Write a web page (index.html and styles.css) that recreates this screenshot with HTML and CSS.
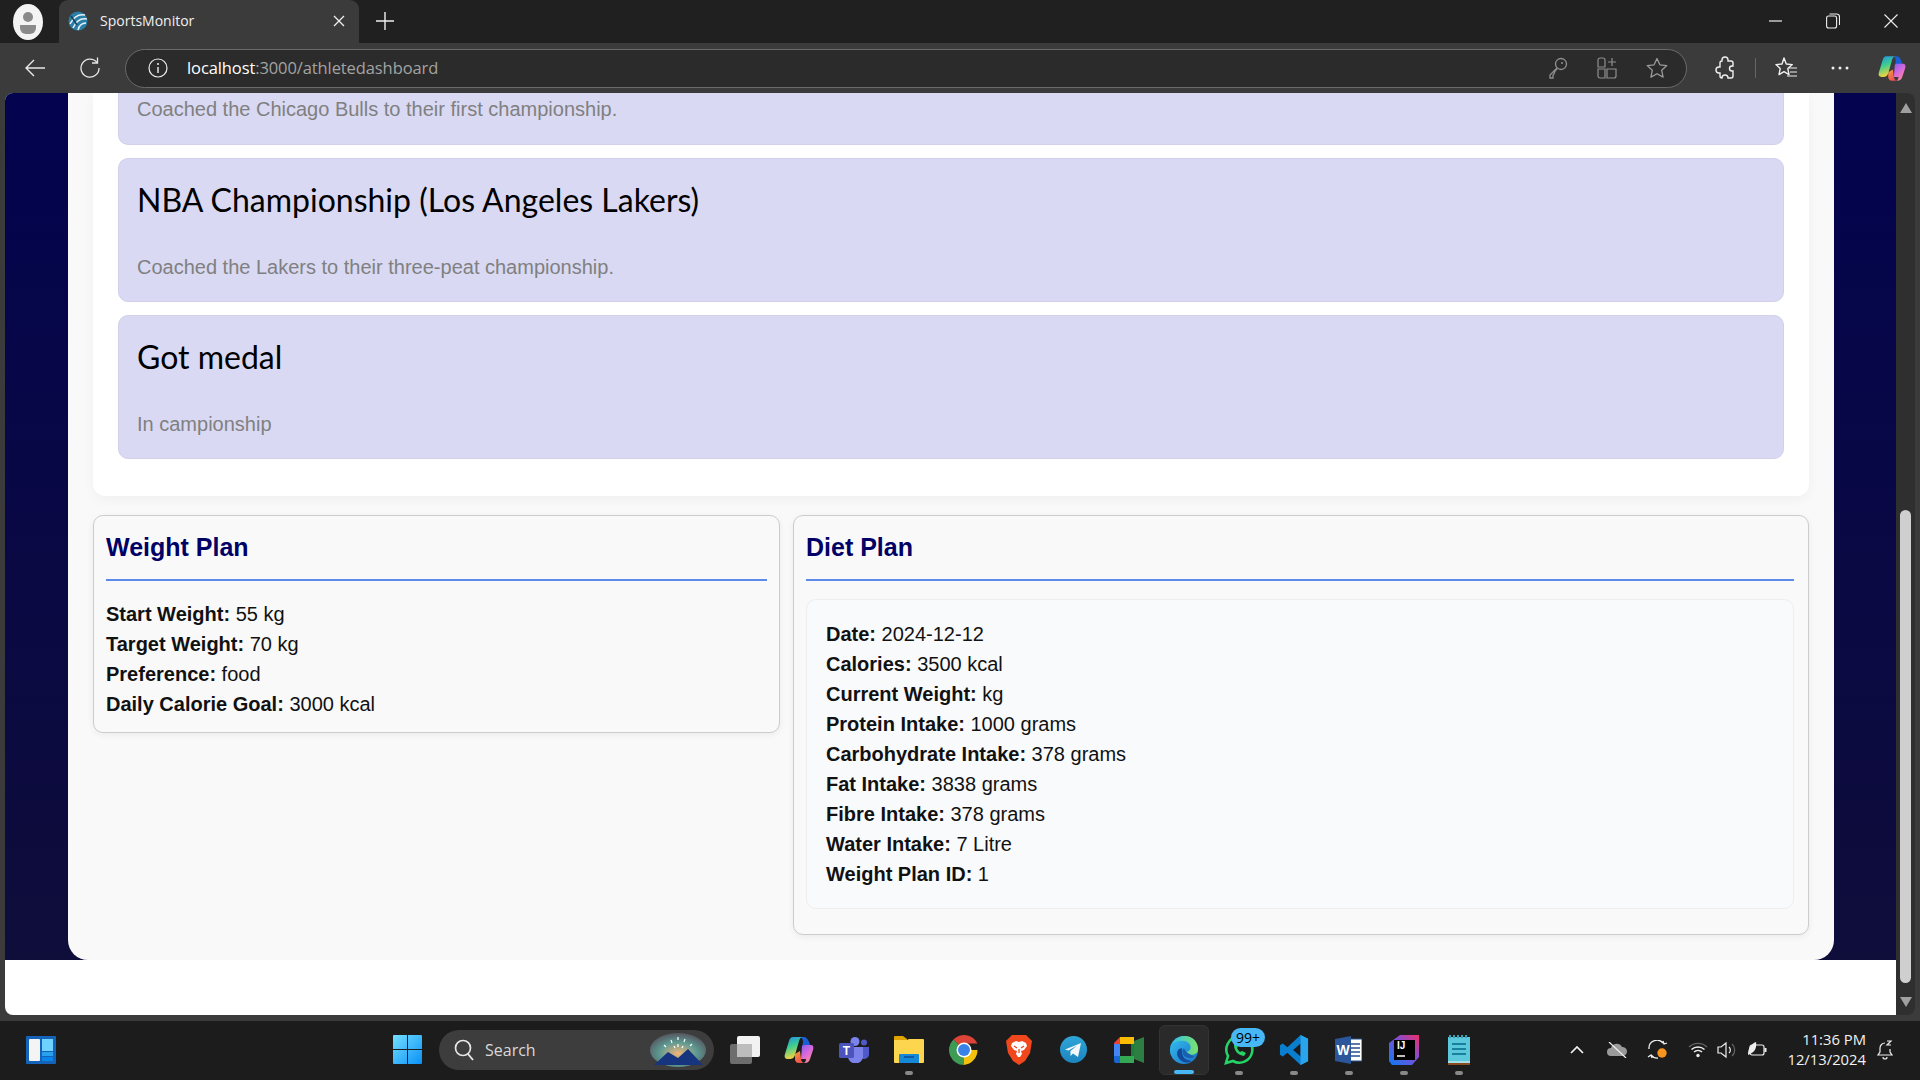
FILE: index.html
```html
<!DOCTYPE html>
<html lang="en">
<head>
    <meta charset="UTF-8">
    <title>SportsMonitor</title>
    <link rel="stylesheet" href="styles.css">
</head>
<body>
    <svg class="icon-defs" width="0" height="0">
        <defs>
            <linearGradient id="cpA" x1="0" y1="0" x2=".3" y2="1"><stop offset="0" stop-color="#1f8fe8"/><stop offset=".5" stop-color="#3fcf8e"/><stop offset="1" stop-color="#f5d33f"/></linearGradient>
            <linearGradient id="cpB" x1="0" y1="0" x2=".6" y2="1"><stop offset="0" stop-color="#8a5cf0"/><stop offset=".6" stop-color="#e06bd8"/><stop offset="1" stop-color="#f58a90"/></linearGradient>
            <linearGradient id="cpC" x1="0" y1="0" x2=".5" y2="1"><stop offset="0" stop-color="#f5a03f"/><stop offset="1" stop-color="#f0504f"/></linearGradient>
            <symbol id="copilot" viewBox="0 0 30 28">
                <path d="M17 1h3c2 0 4 2 5 5l1 3-8 3 1-6c0-2-1-4-2-5z" fill="#1b5fd8"/>
                <path d="M11 18l5-3 1 8c0 2 2 4 3 4h-5c-3 0-4-2-4-4z" fill="url(#cpC)"/>
                <path d="M18 10c1-1 2-1 3-1h6c2 0 3 2 2 5l-3 9c-1 3-3 4-5 4h-2c2 0 3-2 3-4l-5 0z" fill="url(#cpB)"/>
                <path d="M9 1h10c-2 0-3 1-4 4l-4 14c-1 3-3 4-5 4H4C1 23 0 21 1 18L5 5C6 2 7 1 9 1z" fill="url(#cpA)"/>
            </symbol>
        </defs>
    </svg>

    <div class="tabstrip">
        <div class="profile">
            <svg width="30" height="36" viewBox="0 0 30 36"><ellipse cx="15" cy="18" rx="15" ry="18" fill="#f4f4f4"/><circle cx="15" cy="13" r="5" fill="#8a8a8a"/><path d="M7 21h16v3a6 6 0 0 1-6 6h-4a6 6 0 0 1-6-6z" fill="#8a8a8a"/></svg>
        </div>
        <div class="tab">
            <svg width="20" height="20" viewBox="0 0 20 20"><circle cx="10" cy="10" r="9.500" fill="#2a7fa8"/><path d="M2 13C6 5 12 3 17 4M5 17C8 10 13 7 19 8M10 19c1-4 4-7 8-7" fill="none" stroke="#e8f2f6" stroke-width="1.500"/><path d="M3 5l6 9" stroke="#123f5c" stroke-width="1.500"/></svg>
            <span class="tab-title">SportsMonitor</span>
            <svg class="tab-close" width="12" height="12" viewBox="0 0 12 12"><path d="M1 1l10 10M11 1L1 11" stroke="#f0f0f0" stroke-width="1.300"/></svg>
        </div>
        <svg class="new-tab" width="18" height="18" viewBox="0 0 18 18"><path d="M9 0v18M0 9h18" stroke="#f0f0f0" stroke-width="1.400"/></svg>
        <div class="win-controls">
            <svg width="14" height="14" viewBox="0 0 14 14"><path d="M1 7h13" stroke="#eee" stroke-width="1.200"/></svg>
            <svg width="14" height="16" viewBox="0 0 14 16"><rect x=".6" y="3" width="10" height="12" rx="2" fill="none" stroke="#eee" stroke-width="1.100"/><path d="M3.500 1h7a3 3 0 0 1 3 3v8" fill="none" stroke="#eee" stroke-width="1.100"/></svg>
            <svg width="14" height="14" viewBox="0 0 14 14"><path d="M.5.5l13 13M13.500.5l-13 13" stroke="#eee" stroke-width="1.100"/></svg>
        </div>
    </div>

    <div class="toolbar">
        <svg class="tool-back" width="20" height="18" viewBox="0 0 20 18"><path d="M9 1L1 9l8 8M1 9h19" fill="none" stroke="#e8e8e8" stroke-width="1.400"/></svg>
        <svg class="tool-reload" width="20" height="22" viewBox="0 0 20 22"><path d="M17 5.500A9 9 0 1 0 19 11" fill="none" stroke="#e8e8e8" stroke-width="1.300"/><path d="M17.500 .5v5.500h-5.500" fill="none" stroke="#e8e8e8" stroke-width="1.300"/></svg>
        <div class="addressbar">
            <svg width="20" height="20" viewBox="0 0 20 20"><circle cx="10" cy="10" r="9" fill="none" stroke="#eee" stroke-width="1.200"/><path d="M10 9v6" stroke="#eee" stroke-width="1.400"/><circle cx="10" cy="6" r="1" fill="#eee"/></svg>
            <span class="url"><span class="url-host">localhost</span>:3000/athletedashboard</span>
            <span class="address-icons">
                <svg width="20" height="22" viewBox="0 0 20 22"><circle cx="13" cy="7" r="5.500" fill="none" stroke="#8f8f8f" stroke-width="1.300"/><path d="M9 11l-7 7v3h3v-3l1-1 1-3 2-2" fill="none" stroke="#8f8f8f" stroke-width="1.300"/><circle cx="14" cy="6" r="1" fill="#8f8f8f"/></svg>
                <svg width="20" height="22" viewBox="0 0 20 22"><path d="M1 3a2 2 0 0 1 2-2h3a2 2 0 0 1 2 2v7H1zM1 12h7v9H3a2 2 0 0 1-2-2zM10 12h9v7a2 2 0 0 1-2 2h-7zM15 1v8M11 5h8" fill="none" stroke="#8f8f8f" stroke-width="1.200"/></svg>
                <svg width="22" height="22" viewBox="0 0 22 22"><path d="M11 1.500l2.900 6.300 6.900.8-5.100 4.700 1.400 6.800L11 16.700l-6.100 3.400 1.400-6.800L1.200 8.600l6.900-.8z" fill="none" stroke="#9a9a9a" stroke-width="1.300" stroke-linejoin="round"/></svg>
            </span>
        </div>
        <svg class="tool-puzzle" width="20" height="24" viewBox="0 0 20 24"><path d="M7 4a3 3 0 0 1 6 0v1h3a2 2 0 0 1 2 2v3h-1a2.500 2.500 0 0 0 0 5h1v5a2 2 0 0 1-2 2h-3a3 3 0 0 0-6 0 2 2 0 0 1-2-2v-3H4a3 3 0 0 1 0-6h1V7a2 2 0 0 1 2-2z" fill="none" stroke="#f0f0f0" stroke-width="1.400"/></svg>
        <span class="tool-sep"></span>
        <svg class="tool-fav" width="22" height="24" viewBox="0 0 22 24"><path d="M9 2l2.300 6 6 .6-4.500 4 1.200 6-5-3-5 3 1.200-6L1 8.600l6-.6z" fill="none" stroke="#f0f0f0" stroke-width="1.400" stroke-linejoin="round"/><path d="M14 12h8M15 16h7M12 20h10" stroke="#f0f0f0" stroke-width="1.200"/></svg>
        <svg class="tool-dots" width="18" height="4" viewBox="0 0 18 4"><circle cx="2" cy="2" r="1.500" fill="#eee"/><circle cx="9" cy="2" r="1.500" fill="#eee"/><circle cx="16" cy="2" r="1.500" fill="#eee"/></svg>
        <svg class="tool-copilot" width="28" height="27"><use href="#copilot"/></svg>
    </div>

    <div class="viewport">
        <main class="page">
            <div class="backdrop">
                <div class="dashboard">
                    <section class="achievements">
                        <div class="achievement achievement-cut">
                            <p>Coached the Chicago Bulls to their first championship.</p>
                        </div>
                        <div class="achievement">
                            <h3>NBA Championship (Los Angeles Lakers)</h3>
                            <p>Coached the Lakers to their three-peat championship.</p>
                        </div>
                        <div class="achievement">
                            <h3>Got medal</h3>
                            <p>In campionship</p>
                        </div>
                    </section>
                    <div class="plans">
                        <section class="plan plan-weight">
                            <h2>Weight Plan</h2>
                            <p><b>Start Weight:</b> 55 kg</p>
                            <p><b>Target Weight:</b> 70 kg</p>
                            <p><b>Preference:</b> food</p>
                            <p><b>Daily Calorie Goal:</b> 3000 kcal</p>
                        </section>
                        <section class="plan plan-diet">
                            <h2>Diet Plan</h2>
                            <div class="diet-entry">
                                <p><b>Date:</b> 2024-12-12</p>
                                <p><b>Calories:</b> 3500 kcal</p>
                                <p><b>Current Weight:</b> kg</p>
                                <p><b>Protein Intake:</b> 1000 grams</p>
                                <p><b>Carbohydrate Intake:</b> 378 grams</p>
                                <p><b>Fat Intake:</b> 3838 grams</p>
                                <p><b>Fibre Intake:</b> 378 grams</p>
                                <p><b>Water Intake:</b> 7 Litre</p>
                                <p><b>Weight Plan ID:</b> 1</p>
                            </div>
                        </section>
                    </div>
                </div>
            </div>
            <div class="page-foot"></div>
        </main>
        <div class="scrollbar">
            <span class="arrow-up"></span>
            <span class="thumb"></span>
            <span class="arrow-down"></span>
        </div>
    </div>

    <footer class="taskbar">
        <svg class="widgets" width="30" height="28" viewBox="0 0 30 28"><rect width="30" height="28" rx="1" fill="#1463b8"/><rect x="3" y="3" width="11" height="22" rx="1" fill="#f4f4f4"/><rect x="16" y="3" width="11" height="12" fill="#6fd3ff"/><rect x="16" y="16" width="11" height="4" fill="#2aa0f0"/><rect x="16" y="21" width="11" height="4" fill="#0a84e8"/></svg>
        <div class="task-center">
            <svg class="start" width="29" height="29" viewBox="0 0 29 29">
                <defs><linearGradient id="winG" x1="0" y1="0" x2="1" y2="1"><stop offset="0" stop-color="#74e0ff"/><stop offset="1" stop-color="#0a90f5"/></linearGradient></defs>
                <path d="M1 0h13v14H0V1a1 1 0 0 1 1-1zM15 0h13a1 1 0 0 1 1 1v13H15zM0 15h14v14H1a1 1 0 0 1-1-1zM15 15h14v13a1 1 0 0 1-1 1H15z" fill="url(#winG)"/>
            </svg>
            <div class="search">
                <svg width="20" height="22" viewBox="0 0 20 22"><circle cx="9" cy="9" r="7.500" fill="none" stroke="#e6e6e6" stroke-width="1.700"/><path d="M14 15l5 6" stroke="#e6e6e6" stroke-width="1.900"/></svg>
                <span class="search-text">Search</span>
                <svg class="search-art" width="56" height="34" viewBox="0 0 56 34">
                    <defs><radialGradient id="artG" cx=".5" cy=".6" r=".6"><stop offset="0" stop-color="#f2b67a"/><stop offset=".55" stop-color="#5d9a92"/><stop offset="1" stop-color="#55555f"/></radialGradient></defs>
                    <ellipse cx="28" cy="17" rx="28" ry="17" fill="url(#artG)"/>
                    <path d="M4 32l14-13 10 6 10-9 15 16z" fill="#17357f"/>
                    <path d="M28 4v3M21 7l1 3M35 6l-1 3M14 12l2 2M42 11l-2 2M28 11v3M24 13l1 2M33 13l-1 2" stroke="#fff" stroke-width="1.200"/>
                </svg>
            </div>
            <svg class="taskview" width="30" height="28" viewBox="0 0 30 28"><rect x="7" width="23" height="21" rx="2" fill="#f2f2f2"/><rect y="8" width="22" height="20" rx="2" fill="#777" fill-opacity=".9"/><rect x="7" y="8" width="15" height="13" fill="#bdbdbd"/></svg>
            <div class="apps">
                <span class="app"><svg width="30" height="28"><use href="#copilot"/></svg></span>
                <span class="app"><svg width="30" height="26" viewBox="0 0 30 26"><circle cx="16" cy="4.500" r="4.500" fill="#7b83eb"/><circle cx="25" cy="5.500" r="3" fill="#5059c9"/><path d="M21 10h9v7a5 5 0 0 1-9 3z" fill="#5059c9"/><path d="M9 10h15v10a7 6 0 0 1-15 0z" fill="#7b83eb"/><rect y="6" width="15" height="15" rx="1.500" fill="#4b53bc"/><text x="7.500" y="18" class="glyph-t">T</text></svg></span>
                <span class="app"><svg width="30" height="27" viewBox="0 0 30 27"><path d="M0 1a1 1 0 0 1 1-1h8l4 3v3H0z" fill="#e0a400"/><path d="M0 4h13l2-1h14a1 1 0 0 1 1 1v22a1 1 0 0 1-1 1H1a1 1 0 0 1-1-1z" fill="#fdd54f"/><path d="M5 27v-8a1 1 0 0 1 1-1h18a1 1 0 0 1 1 1v8z" fill="#1688d8"/><rect x="10" y="20" width="10" height="2" fill="#0a5ca8"/></svg><i class="dot"></i></span>
                <span class="app"><svg width="30" height="30" viewBox="0 0 30 30"><path d="M15 15L4.400 4.400A15 15 0 0 1 28.500 8.500H15z" fill="#db4437"/><path d="M15 15h13.500A15 15 0 0 1 15 30z" fill="#f4c20d"/><path d="M15 15v15A15 15 0 0 1 4.400 4.400z" fill="#3e9b54"/><circle cx="15" cy="15" r="7.500" fill="#fff"/><circle cx="15" cy="15" r="6" fill="#3b82e8"/></svg></span>
                <span class="app"><svg width="26" height="30" viewBox="0 0 26 30"><path d="M6 0h14l3 3 3 3-2 12-5 8-6 4-6-4-5-8L0 6l3-3z" fill="#f1471d"/><path d="M6 8l4-2 3 1 3-1 4 2 1 3-3 4-3 1 1 3-2 3h-2l-2-3 1-3-3-1-3-4z" fill="#fff"/><path d="M8 11l3 2M18 11l-3 2M13 14v4" stroke="#f1471d" stroke-width="1.300"/></svg></span>
                <span class="app"><svg width="27" height="27" viewBox="0 0 27 27"><defs><linearGradient id="tgG" x1="0" y1="0" x2="0" y2="1"><stop offset="0" stop-color="#2fa5d8"/><stop offset="1" stop-color="#1d84bd"/></linearGradient></defs><circle cx="13.500" cy="13.500" r="13.500" fill="url(#tgG)"/><path d="M5 13.500l16-6.500-3 14-5-3.500-2.500 2.500v-5l6.500-5.500-8.500 5z" fill="#f2f8fc"/></svg></span>
                <span class="app"><svg width="30" height="26" viewBox="0 0 30 26"><path d="M6 0h14v7H6z" fill="#fbbc04"/><path d="M0 6l6-6v7H0z" fill="#ea4335"/><path d="M0 7h6v12H0z" fill="#4285f4"/><path d="M0 19h6v7H2a2 2 0 0 1-2-2z" fill="#1967d2"/><path d="M6 19h14v7H6z" fill="#34a853"/><path d="M20 4v18l10 4V0z" fill="#34a853" opacity=".7"/><path d="M20 7h-3v12h3z" fill="#188038"/></svg></span>
                <span class="app app-active"><svg width="30" height="30" viewBox="0 0 30 32">
                    <defs>
                        <linearGradient id="edgeA" x1="0" y1="0" x2="1" y2="1"><stop offset="0" stop-color="#35c1f1"/><stop offset="1" stop-color="#1b6fc4"/></linearGradient>
                        <linearGradient id="edgeB" x1="0" y1="0" x2="1" y2="0"><stop offset="0" stop-color="#2fc3e8"/><stop offset="1" stop-color="#7ee06b"/></linearGradient>
                    </defs>
                    <circle cx="15" cy="16" r="15" fill="url(#edgeA)"/>
                    <path d="M2 10C6 2 12 1 16 1c8 0 14 6 14 14 0 4-3 6-6 6-3 0-5-1-6-3 3-1 4-3 4-5 0-4-4-7-9-7-5 0-9 2-11 4z" fill="url(#edgeB)"/>
                    <path d="M13 14c-5 0-7 5-4 10s9 7 14 4l-3-1c-4-1-8-4-7-13z" fill="#124a9c"/>
                    <path d="M15 14c-3 2-2 8 3 10 3 1 6 1 8-1l-6-3c-3-2-4-4-5-6z" fill="#1b5fb0"/>
                </svg><i class="dot dot-active"></i></span>
                <span class="app"><svg width="30" height="30" viewBox="0 0 30 30"><path d="M2 28l2-7A13 13 0 1 1 9 26z" fill="none" stroke="#25d366" stroke-width="2.600"/><path d="M10 10c0 6 4 10 10 11l2-3-4-2-2 1c-1-1-2-2-3-4l1-2-2-3z" fill="#25d366"/></svg><i class="dot"></i><em class="badge">99+</em></span>
                <span class="app"><svg width="30" height="30" viewBox="0 0 30 32"><path d="M22 0l8 4v24l-8 4-14-13-5 4-3-2v-10l3-2 5 4zM22 9l-8 7 8 7z" fill="#0a7fd0"/><path d="M22 0l8 4v24l-8 4z" fill="#2aa5ec"/></svg><i class="dot"></i></span>
                <span class="app"><svg width="27" height="28" viewBox="0 0 27 28"><rect x="12" y="3" width="15" height="22" fill="#fff" stroke="#24508f"/><path d="M16 8h9M16 12h9M16 16h9M16 20h9" stroke="#24508f" stroke-width="1.500"/><path d="M0 3l16-3v28L0 25z" fill="#2b579a"/><text x="8" y="19" class="glyph-w">W</text></svg><i class="dot"></i></span>
                <span class="app"><svg width="30" height="30" viewBox="0 0 30 30">
                    <defs><linearGradient id="ijG" x1="0" y1="1" x2="1" y2="0"><stop offset="0" stop-color="#0a7cf2"/><stop offset=".55" stop-color="#7a4fd8"/><stop offset="1" stop-color="#f02e6a"/></linearGradient></defs>
                    <path d="M0 8L11 0h19v22l-7 8H3l-3-4z" fill="url(#ijG)"/><rect x="5" y="5" width="21" height="20" fill="#000"/><text x="8" y="14" class="glyph-ij">IJ</text><path d="M8 21h8" stroke="#fff" stroke-width="1.500"/></svg><i class="dot"></i></span>
                <span class="app"><svg width="22" height="30" viewBox="0 0 22 30"><rect y="2" width="22" height="28" fill="#5cc8dc"/><rect y="26" width="22" height="2" fill="#a5e0ea"/><rect y="28" width="22" height="2" fill="#8a4b20"/><path d="M2 0v3M6 0v3M10 0v3M14 0v3M18 0v3" stroke="#3a9fb5" stroke-width="2"/><path d="M4 9h14M4 14h14M4 19h14" stroke="#1a7f9c" stroke-width="2"/></svg><i class="dot"></i></span>
            </div>
        </div>
        <div class="tray">
            <svg class="tray-chevron" width="14" height="8" viewBox="0 0 14 8"><path d="M1 7l6-6 6 6" fill="none" stroke="#f2f2f2" stroke-width="1.700"/></svg>
            <svg class="tray-cloud" width="22" height="16" viewBox="0 0 22 16"><path d="M5 14a4 4 0 0 1 0-8 6 6 0 0 1 11-1 4.500 4.500 0 0 1 1 9z" fill="#9a9a9a"/><path d="M3 0l17 16" stroke="#f0f0f0" stroke-width="1.200"/></svg>
            <svg class="tray-sync" width="22" height="20" viewBox="0 0 22 20"><path d="M2 9A8 8 0 0 1 16 3M20 3l-3 1-1-3" fill="none" stroke="#eee" stroke-width="1.300"/><path d="M11 18a8 8 0 0 1-7-3M1 17l3-2 1 3" fill="none" stroke="#eee" stroke-width="1.300"/><circle cx="15" cy="13" r="4.700" fill="#f7941d"/></svg>
            <svg class="tray-wifi" width="20" height="16" viewBox="0 0 20 16"><path d="M1 5a13 13 0 0 1 18 0" fill="none" stroke="#666" stroke-width="1.300"/><path d="M3.500 7.500a9.500 9.500 0 0 1 13 0M6 10a6 6 0 0 1 8 0" fill="none" stroke="#eee" stroke-width="1.500"/><circle cx="10" cy="13.500" r="1.700" fill="#eee"/></svg>
            <svg class="tray-volume" width="20" height="18" viewBox="0 0 20 18"><path d="M1 6h3l5-4v14l-5-4H1z" fill="none" stroke="#eee" stroke-width="1.200"/><path d="M12 6a4 4 0 0 1 0 6" fill="none" stroke="#eee" stroke-width="1.200"/><path d="M15 3a8 8 0 0 1 0 12" fill="none" stroke="#666" stroke-width="1.200"/></svg>
            <svg class="tray-battery" width="20" height="16" viewBox="0 0 20 16"><rect x="3" y="3" width="14" height="10" rx="2" fill="none" stroke="#eee" stroke-width="1.200"/><rect x="17.500" y="6" width="2" height="4" fill="#eee"/><path d="M1 13C1 6 4 2 9 0c1 5-1 10-6 12z" fill="#eee"/></svg>
            <div class="clock"><span>11:36 PM</span><span>12/13/2024</span></div>
            <svg class="tray-bell" width="18" height="20" viewBox="0 0 18 20"><path d="M9 3a5 5 0 0 0-5 5v4l-2 3h14l-2-3V9" fill="none" stroke="#eee" stroke-width="1.200"/><path d="M7 17a2 2 0 0 0 4 0" fill="none" stroke="#eee" stroke-width="1.200"/><path d="M11 1h4l-4 4h4" fill="none" stroke="#eee" stroke-width="1.200"/></svg>
        </div>
    </footer>
</body>
</html>
```

FILE: styles.css
```css
* {
    box-sizing: border-box;
}
html, body {
    margin: 0;
    padding: 0;
}
body {
    width: 1920px;
    height: 1080px;
    overflow: hidden;
    display: flex;
    flex-direction: column;
    background-color: #1c1c1c;
    font-family: "Liberation Sans", Arial, sans-serif;
}
svg {
    display: block;
    flex: none;
}
.icon-defs {
    position: absolute;
}

/* browser chrome */
.tabstrip {
    height: 43px;
    display: flex;
    align-items: center;
    background-color: #202020;
    padding-left: 13px;
}
.profile {
    width: 30px;
    margin-right: 16px;
}
.tab {
    width: 300px;
    height: 43px;
    display: flex;
    align-items: center;
    padding: 0 14px 1px 9px;
    background-color: #3b3b3b;
    border-radius: 9px 9px 0 0;
}
.tab-title {
    flex: 1;
    margin-left: 12px;
    margin-bottom: 1px;
    color: #f0f0f0;
    font-family: "Open Sans", sans-serif;
    font-size: 14px;
}
.new-tab {
    margin-left: 17px;
    margin-bottom: 1px;
}
.win-controls {
    margin-left: auto;
    margin-bottom: 1px;
    display: flex;
    align-items: center;
    gap: 44px;
    padding-right: 22px;
}
.toolbar {
    height: 50px;
    display: flex;
    align-items: center;
    background-color: #3b3b3b;
}
.tool-back {
    margin-left: 25px;
}
.tool-reload {
    margin-left: 35px;
}
.addressbar {
    width: 1562px;
    height: 39px;
    margin-left: 25px;
    display: flex;
    align-items: center;
    padding: 0 18px 0 22px;
    background-color: #2b2b2b;
    border: 1px solid #6a6a6a;
    border-radius: 20px;
}
.url {
    margin-left: 19px;
    margin-bottom: 2px;
    color: #a3a3a3;
    font-family: "Open Sans", sans-serif;
    font-size: 16.500px;
    letter-spacing: -0.1px;
}
.url-host {
    color: #ffffff;
}
.address-icons {
    margin-left: auto;
    display: flex;
    align-items: center;
    gap: 29px;
}
.tool-puzzle {
    margin-left: 28px;
}
.tool-sep {
    width: 1px;
    height: 20px;
    margin-left: 20px;
    background-color: #666;
}
.tool-fav {
    margin-left: 19px;
}
.tool-dots {
    margin-left: 34px;
}
.tool-copilot {
    margin-left: 29px;
}

/* page area */
.viewport {
    height: 928px;
    display: flex;
    align-items: flex-start;
    padding-left: 5px;
    background-color: #3b3b3b;
}
.page {
    width: 1891px;
    height: 922px;
    border-radius: 8px 0 0 8px;
    overflow: hidden;
    background-color: #fff;
}
.backdrop {
    height: 867px;
    padding: 0 62px 0 63px;
    background: linear-gradient(#03034f, #0f0d3a);
}
.dashboard {
    height: 867px;
    padding: 0 25px 26px;
    background-color: #f9f9f9;
    border-radius: 0 0 20px 20px;
}
.achievements {
    margin: 0 0 19px;
    padding: 0 25px 37px;
    background-color: #fff;
    border-radius: 0 0 12px 12px;
    box-shadow: 0 4px 12px rgba(0, 0, 0, 0.04);
}
.achievement {
    height: 144px;
    margin-bottom: 13px;
    padding: 18px 18px;
    background-color: #d9d9f3;
    border: 1px solid #d0d0ea;
    border-radius: 10px;
}
.achievement:last-child {
    margin-bottom: 0;
}
.achievement-cut {
    height: 52px;
    padding-top: 1px;
    border-top: none;
    border-radius: 0 0 10px 10px;
}
.achievement h3 {
    margin: 0 0 29px;
    color: #000;
    font-family: Lato, sans-serif;
    font-weight: 400;
    font-size: 32px;
    line-height: 46px;
}
.achievement p {
    margin: 0;
    color: #808080;
    font-size: 20px;
    line-height: 30px;
}
.plans {
    display: flex;
    align-items: flex-start;
    gap: 13px;
}
.plan {
    padding: 13px 12px 12px;
    background-color: #f9f9f9;
    border: 1px solid #cccccc;
    border-radius: 10px;
    box-shadow: 0 2px 6px rgba(0, 0, 0, 0.06);
}
.plan-weight {
    width: 687px;
    height: 218px;
}
.plan-diet {
    width: 1016px;
    height: 420px;
    padding-right: 14px;
}
.plan h2 {
    margin: 0 0 18px;
    padding-bottom: 14px;
    color: #000066;
    font-size: 25px;
    line-height: 36px;
    border-bottom: 2px solid #5b8ae8;
}
.plan p {
    margin: 0;
    color: #111;
    font-size: 20px;
    line-height: 30px;
}
.diet-entry {
    height: 310px;
    padding: 19px;
    background-color: #f9fafc;
    border: 1px solid #eeeeee;
    border-radius: 10px;
}

/* scrollbar */
.scrollbar {
    width: 19px;
    height: 922px;
    display: flex;
    flex-direction: column;
    align-items: center;
    background-color: #2f2f2f;
    border-radius: 0 8px 8px 0;
}
.arrow-up, .arrow-down {
    width: 0;
    height: 0;
    border-left: 6.500px solid transparent;
    border-right: 6.500px solid transparent;
}
.arrow-up {
    margin-top: 10px;
    border-bottom: 10px solid #a0a0a0;
}
.arrow-down {
    margin-top: 14px;
    margin-bottom: 8px;
    border-top: 10px solid #a0a0a0;
}
.thumb {
    width: 11px;
    height: 473px;
    margin-top: auto;
    background-color: #cfcfcf;
    border-radius: 6px;
}

/* taskbar */
.taskbar {
    height: 59px;
    position: relative;
    display: flex;
    align-items: center;
    padding-left: 26px;
    padding-bottom: 2px;
    background-color: #1c1c1c;
}
.task-center {
    display: flex;
    align-items: center;
    margin-left: 337px;
}
.search {
    width: 275px;
    height: 40px;
    margin-left: 17px;
    display: flex;
    align-items: center;
    padding-left: 15px;
    background-color: #3d3d3d;
    border-radius: 20px;
}
.search-text {
    margin-left: 11px;
    margin-top: 1px;
    color: #d8d8d8;
    font-family: "Open Sans", sans-serif;
    font-size: 16px;
}
.search-art {
    margin-left: auto;
    margin-right: 8px;
}
.taskview {
    margin-left: 16px;
}
.apps {
    display: flex;
    margin-left: 11px;
}
.app {
    position: relative;
    width: 55px;
    height: 50px;
    display: flex;
    align-items: center;
    justify-content: center;
    border-radius: 6px;
}
.app-active {
    width: 50px;
    margin: 0 2.500px;
    background-color: #2a2a2a;
    border: 1px solid #333;
}
.dot {
    position: absolute;
    bottom: 0;
    left: 50%;
    width: 8px;
    height: 4px;
    margin-left: -4px;
    background-color: #888;
    border-radius: 2px;
}
.dot-active {
    width: 20px;
    margin-left: -10px;
    background-color: #47b8f5;
}
.badge {
    position: absolute;
    top: 3px;
    left: 20px;
    width: 34px;
    height: 19px;
    color: #000;
    background-color: #47b8f5;
    border-radius: 10px;
    font-family: "Open Sans", sans-serif;
    font-style: normal;
    font-size: 14px;
    line-height: 19px;
    text-align: center;
}
.glyph-t, .glyph-w, .glyph-ij {
    fill: #fff;
    font-family: "Liberation Sans", sans-serif;
    font-weight: 700;
    text-anchor: middle;
}
.glyph-t {
    font-size: 12px;
}
.glyph-w {
    font-size: 14px;
}
.glyph-ij {
    font-size: 10px;
    text-anchor: start;
}
.tray {
    margin-left: auto;
    display: flex;
    align-items: center;
    padding-right: 26px;
}
.tray-cloud {
    margin-left: 22px;
}
.tray-sync {
    margin-left: 19px;
}
.tray-wifi {
    margin-left: 19px;
}
.tray-volume {
    margin-left: 9px;
}
.tray-battery {
    margin-left: 10px;
}
.clock {
    width: 77px;
    margin-left: 22px;
    margin-bottom: 2px;
    display: flex;
    flex-direction: column;
    align-items: flex-end;
    color: #f2f2f2;
    font-family: "Open Sans", sans-serif;
    font-size: 14.800px;
    line-height: 20px;
    white-space: nowrap;
}
.tray-bell {
    margin-left: 10px;
}
```
